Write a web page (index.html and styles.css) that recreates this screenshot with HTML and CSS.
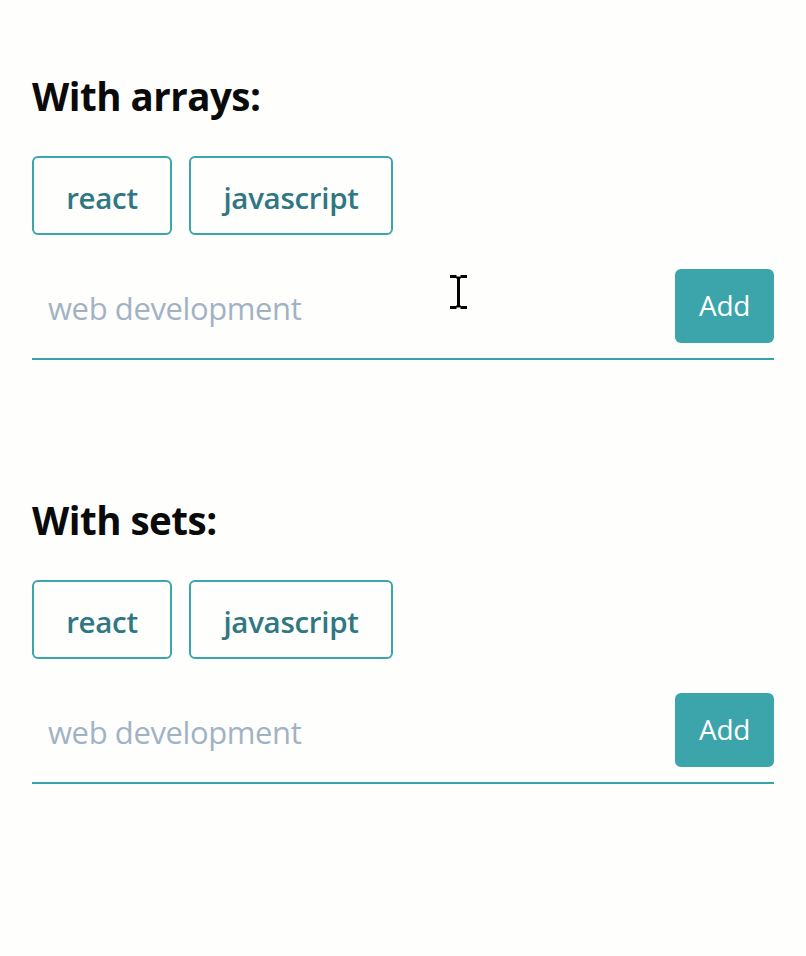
FILE: index.html
```html
<!DOCTYPE html>
<html lang="en">
<head>
<meta charset="utf-8">
<title>Tags</title>
<link rel="stylesheet" href="styles.css">
</head>
<body>
<main class="page">
  <section class="demo">
    <h2 class="title">With arrays:</h2>
    <div class="tags">
      <span class="tag">react</span>
      <span class="tag">javascript</span>
    </div>
    <form class="adder">
      <input class="field" type="text" placeholder="web development">
      <button class="add" type="button">Add</button>
    </form>
  </section>
  <section class="demo">
    <h2 class="title">With sets:</h2>
    <div class="tags">
      <span class="tag">react</span>
      <span class="tag">javascript</span>
    </div>
    <form class="adder">
      <input class="field" type="text" placeholder="web development">
      <button class="add" type="button">Add</button>
    </form>
  </section>
</main>
<svg class="cursor" width="20" height="34" viewBox="0 0 20 34" aria-hidden="true">
  <path d="M1 1.5h6.5M11.5 1.5H18M9.5 2.5v29M1 32.5h6.5M11.5 32.5H18" stroke="#000" stroke-width="3" fill="none"/>
  <path d="M7 2.5h5M7 31.5h5" stroke="#000" stroke-width="2" fill="none"/>
</svg>
</body>
</html>
```
FILE: styles.css
```css
html, body {
  margin: 0;
  padding: 0;
  background: #fefefd;
}
body {
  font-family: "Open Sans", "Noto Sans", sans-serif;
  color: #0a0a0a;
}
.page {
  padding: 64px 32px 0 32px;
  width: 742px;
}
.demo {
  margin-bottom: 128px;
}
.title {
  margin: 0;
  font-size: 38.5px;
  font-weight: 700;
  line-height: 64px;
  letter-spacing: -0.5px;
}
.tags {
  display: flex;
  gap: 17px;
  margin-top: 28px;
}
.tag {
  box-sizing: border-box;
  height: 79px;
  display: flex;
  align-items: center;
  justify-content: center;
  padding-top: 3px;
  border: 2px solid #3ca4ab;
  border-radius: 6px;
  color: #2f7782;
  font-size: 29.5px;
  font-weight: 600;
  letter-spacing: -0.3px;
}
.tag:first-child { width: 140px; }
.tag:nth-child(2) { width: 204px; }
.adder {
  display: flex;
  align-items: center;
  margin: 34px 0 0 0;
  padding-bottom: 15px;
  border-bottom: 2px solid #3aa3aa;
}
.field {
  flex: 1;
  min-width: 0;
  border: none;
  outline: none;
  background: transparent;
  padding: 4px 0 0 16px;
  height: 74px;
  box-sizing: border-box;
  font-family: inherit;
  font-size: 31px;
  letter-spacing: -0.4px;
  color: #333;
}
.field::placeholder {
  color: #a2b2c5;
}
.add {
  width: 99px;
  height: 74px;
  border: none;
  border-radius: 6px;
  background: #3ba5ab;
  color: #fff;
  font-family: inherit;
  font-size: 28px;
  letter-spacing: -0.4px;
  padding: 0 0 2px 0;
}
.cursor {
  position: absolute;
  left: 449px;
  top: 275px;
}
```
